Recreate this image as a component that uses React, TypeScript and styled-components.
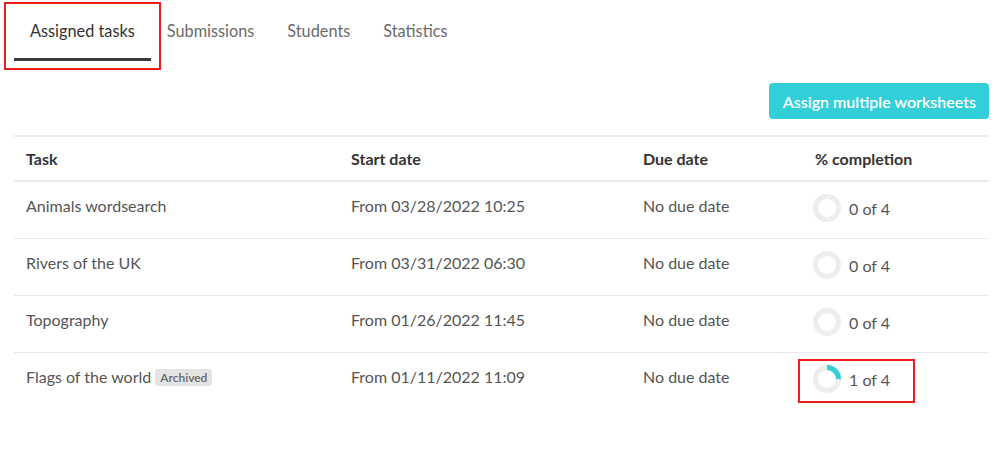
import React from 'react'
import styled, { createGlobalStyle } from 'styled-components'

const GlobalStyle = createGlobalStyle`
	body {
		margin: 0;
		background: #fff;
		font-family: 'Lato', 'Noto Sans', sans-serif;
		color: #555;
	}
`

type Task = {
	name: string
	start: string
	done: number
	total: number
	archived?: boolean
	highlighted?: boolean
}

const tasks: Task[] = [
	{ name: 'Animals wordsearch', start: 'From 03/28/2022 10:25', done: 0, total: 4 },
	{ name: 'Rivers of the UK', start: 'From 03/31/2022 06:30', done: 0, total: 4 },
	{ name: 'Topography', start: 'From 01/26/2022 11:45', done: 0, total: 4 },
	{
		name: 'Flags of the world',
		start: 'From 01/11/2022 11:09',
		done: 1,
		total: 4,
		archived: true,
		highlighted: true,
	},
]

const tabs = ['Assigned tasks', 'Submissions', 'Students', 'Statistics']

const ProgressRing = ({ done, total }: { done: number; total: number }) => {
	const r = 11.5
	const c = 2 * Math.PI * r
	const filled = total ? (done / total) * c : 0
	return (
		<svg width="28" height="28" viewBox="0 0 28 28">
			<circle cx="14" cy="14" r={r} fill="none" stroke="#ededed" strokeWidth="5" />
			{filled > 0 && (
				<circle
					cx="14"
					cy="14"
					r={r}
					fill="none"
					stroke="#33cfd9"
					strokeWidth="5"
					strokeDasharray={`${filled} ${c}`}
					transform="rotate(-90 14 14)"
				/>
			)}
		</svg>
	)
}

export default function App() {
	return (
		<Page>
			<GlobalStyle />
			<TabBar>
				{tabs.map((t, i) => (
					<Tab key={t} active={i === 0}>
						{t}
						{i === 0 && <TabMarker />}
					</Tab>
				))}
			</TabBar>
			<Toolbar>
				<AssignButton>Assign multiple worksheets</AssignButton>
			</Toolbar>
			<Table>
				<HeaderRow>
					<HeaderCell>Task</HeaderCell>
					<HeaderCell>Start date</HeaderCell>
					<HeaderCell>Due date</HeaderCell>
					<HeaderCell>% completion</HeaderCell>
				</HeaderRow>
				{tasks.map((task, i) => (
					<Row key={task.name} last={i === tasks.length - 1}>
						<Cell>
							{task.name}
							{task.archived && <Badge>Archived</Badge>}
						</Cell>
						<Cell>{task.start}</Cell>
						<Cell>No due date</Cell>
						<Completion>
							<ProgressRing done={task.done} total={task.total} />
							<span>
								{task.done} of {task.total}
							</span>
							{task.highlighted && <CompletionMarker />}
						</Completion>
					</Row>
				))}
			</Table>
		</Page>
	)
}

const Page = styled.div`
	padding: 0 11px 0 14px;
	height: 451px;
	box-sizing: border-box;
`

const TabBar = styled.div`
	display: flex;
	height: 61px;
`

const Tab = styled.div<{ active?: boolean }>`
	position: relative;
	padding: 21px 16px 0;
	font-size: 16.3px;
	line-height: 20px;
	color: ${(p) => (p.active ? '#333' : '#6a6a6a')};
	border-bottom: 3px solid ${(p) => (p.active ? '#3a3a3a' : 'transparent')};
	box-sizing: border-box;
	& + & {
		padding: 21px 17px 0 16px;
	}
`

const Highlight = styled.div`
	position: absolute;
	border: 2px solid #f01c1c;
	pointer-events: none;
`

const TabMarker = styled(Highlight)`
	top: 2px;
	bottom: -12px;
	left: -10px;
	right: -10px;
`

const CompletionMarker = styled(Highlight)`
	top: 6px;
	bottom: -10px;
	left: -5px;
	width: 117px;
	box-sizing: border-box;
`

const Toolbar = styled.div`
	display: flex;
	justify-content: flex-end;
	padding-top: 22px;
	height: 74px;
	box-sizing: border-box;
`

const AssignButton = styled.button`
	background: #33cfd9;
	color: #fff;
	border: none;
	border-radius: 4px;
	height: 36px;
	padding: 0 13px 0 14px;
	font-family: inherit;
	font-size: 16px;
	font-weight: 600;
`

const Table = styled.div`
	border-top: 2px solid #e9ebee;
`

const columns = '325px 292px 172px 1fr'

const HeaderRow = styled.div`
	display: grid;
	grid-template-columns: ${columns};
	border-bottom: 2px solid #e9ebee;
	height: 45px;
	box-sizing: border-box;
	align-items: center;
`

const HeaderCell = styled.div`
	padding: 0 12px 1px;
	font-size: 16px;
	font-weight: 700;
	color: #333;
`

const Row = styled.div<{ last?: boolean }>`
	display: grid;
	grid-template-columns: ${columns};
	border-bottom: 1px solid ${(p) => (p.last ? 'transparent' : '#e6e8eb')};
	height: 57px;
	box-sizing: border-box;
`

const Cell = styled.div`
	padding: 14px 12px 0;
	font-size: 16px;
	line-height: 20px;
	color: #555;
	display: flex;
	align-items: center;
	align-self: start;
`

const Badge = styled.span`
	margin-left: 4px;
	background: #e4e4e4;
	color: #666;
	font-size: 12px;
	font-weight: 600;
	line-height: 17px;
	padding: 0 5px;
	border-radius: 3px;
`

const Completion = styled.div`
	position: relative;
	display: flex;
	align-items: center;
	gap: 8px;
	padding: 12px 12px 0 10px;
	align-self: start;
	font-size: 16px;
	color: #555;
	width: fit-content;
`
